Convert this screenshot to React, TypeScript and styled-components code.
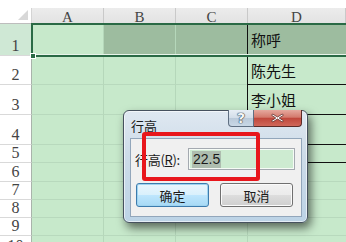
import styled, { createGlobalStyle } from 'styled-components';

const GlobalStyle = createGlobalStyle`
  html, body {
    margin: 0;
    padding: 0;
    background: #fff;
  }
  * {
    box-sizing: border-box;
  }
`;

const COLUMNS = ['A', 'B', 'C', 'D'];
const ROW_HEIGHTS = [32, 29, 30, 30, 18, 19, 18, 18, 18, 20];
const D_TEXT: Record<number, string> = { 1: '称呼', 2: '陈先生', 3: '李小姐' };
const BORDERED_ROWS = 5;

export default function App() {
  return (
    <>
      <GlobalStyle />
      <Page>
        <Sheet $rows={ROW_HEIGHTS}>
          <Corner>
            <CornerTriangle />
          </Corner>
          {COLUMNS.map((letter) => (
            <ColHead key={letter}>{letter}</ColHead>
          ))}
          {ROW_HEIGHTS.map((_, index) => {
            const row = index + 1;
            const isSelected = row === 1;
            return [
              <RowHead key={`h${row}`} $selected={isSelected}>
                {row}
              </RowHead>,
              ...COLUMNS.map((letter, colIndex) => {
                const isD = letter === 'D';
                const bordered = isD && row <= BORDERED_ROWS;
                return (
                  <Cell
                    key={`${letter}${row}`}
                    $shaded={isSelected && colIndex > 0}
                    $blackLeft={bordered}
                    $blackBottom={bordered && row > 1}
                    $last={isD}
                  >
                    {isD && D_TEXT[row]}
                  </Cell>
                );
              })
            ];
          })}
          <RowSelection>
            <FillHandle />
          </RowSelection>
        </Sheet>

        <DialogFrame>
          <TitleBar>
            <TitleText>行高</TitleText>
            <CaptionButtons>
              <HelpButton>?</HelpButton>
              <CloseButton>
                <svg width="13" height="10" viewBox="0 0 12 9">
                  <path
                    d="M1.5 0.8 L6 3.6 L10.5 0.8 L11.4 2 L7.6 4.5 L11.4 7 L10.5 8.2 L6 5.4 L1.5 8.2 L0.6 7 L4.4 4.5 L0.6 2 Z"
                    fill="#fff"
                    stroke="#5a2a26"
                    strokeWidth="0.7"
                  />
                </svg>
              </CloseButton>
            </CaptionButtons>
          </TitleBar>
          <ClientArea>
            <FieldRow>
              <FieldLabel>
                行高(<u>R</u>):
              </FieldLabel>
              <HeightInput>
                <SelectedText>22.5</SelectedText>
              </HeightInput>
            </FieldRow>
            <ButtonRow>
              <DialogButton $primary>确定</DialogButton>
              <DialogButton>取消</DialogButton>
            </ButtonRow>
          </ClientArea>
        </DialogFrame>

        <Highlight />
      </Page>
    </>
  );
}

const Page = styled.div`
  position: relative;
  width: 346px;
  height: 242px;
  overflow: hidden;
  background: #fff;
`;

const Sheet = styled.div<{ $rows: number[] }>`
  position: relative;
  display: grid;
  grid-template-columns: 32px 72px 72px 72px 1fr;
  grid-template-rows: 16px ${({ $rows }) => $rows.map((h) => `${h}px`).join(' ')};
  margin-top: 8px;
`;

const Corner = styled.div`
  position: relative;
  background: #fff;
  border-right: 1px solid #d4d4d4;
  border-bottom: 1px solid #bdbdbd;
`;

const CornerTriangle = styled.div`
  position: absolute;
  right: 3px;
  bottom: 3px;
  width: 0;
  height: 0;
  border-left: 10px solid transparent;
  border-bottom: 10px solid #d8d8d8;
`;

const ColHead = styled.div`
  display: flex;
  align-items: center;
  justify-content: center;
  padding-top: 2px;
  background: linear-gradient(#ececec, #e2e2e2);
  border-right: 1px solid #c9c9c9;
  font-family: 'Liberation Serif', 'DejaVu Serif', serif;
  font-size: 15px;
  color: #444;
`;

const RowHead = styled.div<{ $selected: boolean }>`
  display: flex;
  align-items: flex-end;
  justify-content: center;
  padding-bottom: 1px;
  line-height: 16px;
  background: ${({ $selected }) => ($selected ? '#cfe8d5' : '#fff')};
  border-right: 1px solid ${({ $selected }) => ($selected ? '#7fa889' : '#a9b3ab')};
  border-bottom: 1px solid #d9d9d9;
  font-family: 'Liberation Serif', 'DejaVu Serif', serif;
  font-size: 16px;
  color: #444;
`;

const Cell = styled.div<{
  $shaded: boolean;
  $blackLeft: boolean;
  $blackBottom: boolean;
  $last: boolean;
}>`
  display: flex;
  align-items: center;
  padding-left: 3px;
  background: ${({ $shaded }) => ($shaded ? '#9dbc9f' : '#c7e9cb')};
  border-right: ${({ $last }) => ($last ? 'none' : '1px solid #b5d7ba')};
  border-bottom: 1px solid ${({ $blackBottom }) => ($blackBottom ? '#111' : '#b8d9bd')};
  border-left: ${({ $blackLeft }) => ($blackLeft ? '1px solid #111' : 'none')};
  margin-left: ${({ $blackLeft }) => ($blackLeft ? '-1px' : '0')};
  font-family: 'Noto Sans CJK SC', sans-serif;
  font-size: 15px;
  color: #111;
  white-space: nowrap;
`;

const RowSelection = styled.div`
  position: absolute;
  left: 31px;
  top: 15px;
  right: -2px;
  height: 34px;
  border: 2px solid #2a6a45;
  border-right: none;
  box-shadow: inset 0 -1px 0 #e8f4ea;
  pointer-events: none;
`;

const FillHandle = styled.div`
  position: absolute;
  left: -3px;
  bottom: -4px;
  width: 6px;
  height: 6px;
  background: #2a6a45;
  border: 1px solid #fff;
`;

const DialogFrame = styled.div`
  position: absolute;
  left: 123px;
  top: 110px;
  width: 185px;
  height: 113px;
  display: flex;
  flex-direction: column;
  border: 1px solid #46515e;
  border-radius: 6px;
  background: linear-gradient(180deg, #dfe8f1 0%, #cddbe8 40%, #bcd3e6 100%);
  box-shadow: 3px 5px 10px rgba(0, 0, 0, 0.55), inset 0 0 0 1px rgba(255, 255, 255, 0.6);
`;

const TitleBar = styled.div`
  display: flex;
  justify-content: space-between;
  height: 27px;
  padding-left: 7px;
  padding-right: 5px;
`;

const TitleText = styled.span`
  align-self: center;
  margin-top: 2px;
  font-family: 'Noto Sans CJK SC', sans-serif;
  font-size: 13px;
  color: #1a1a1a;
`;

const CaptionButtons = styled.div`
  display: flex;
  align-items: flex-start;
  margin-top: -1px;
`;

const HelpButton = styled.div`
  width: 26px;
  height: 17px;
  display: flex;
  align-items: center;
  justify-content: center;
  border: 1px solid #5f6f82;
  border-top: none;
  border-radius: 0 0 0 4px;
  background: linear-gradient(180deg, #e7eef5 0%, #d2dde8 50%, #b9c9d9 51%, #c9d8e6 100%);
  font-family: 'DejaVu Sans', sans-serif;
  font-size: 14px;
  font-weight: bold;
  color: #f4f6f8;
  text-shadow: 0 0 1px #2d3a48, 0 0 1px #2d3a48, 0 0 1px #2d3a48;
`;

const CloseButton = styled.div`
  width: 48px;
  height: 17px;
  display: flex;
  align-items: center;
  justify-content: center;
  border: 1px solid #5b2b27;
  border-left: none;
  border-top: none;
  border-radius: 0 0 4px 0;
  background: linear-gradient(180deg, #e6a99e 0%, #d47a6d 45%, #c0483c 52%, #d0685a 100%);
`;

const ClientArea = styled.div`
  flex: 1;
  display: flex;
  flex-direction: column;
  margin: 0 5px 5px 6px;
  padding: 9px 0 0 4px;
  background: #f0f0f0;
  border: 1px solid #92a6bb;
`;

const FieldRow = styled.div`
  display: flex;
  align-items: center;
`;

const FieldLabel = styled.span`
  width: 53px;
  font-family: 'Noto Sans CJK SC', sans-serif;
  font-size: 13px;
  letter-spacing: -0.3px;
  color: #1a1a1a;
  white-space: nowrap;

  u {
    text-decoration-thickness: 1px;
    text-underline-offset: 1px;
  }
`;

const HeightInput = styled.div`
  width: 107px;
  height: 22px;
  display: flex;
  align-items: center;
  padding-left: 3px;
  border: 1px solid #a4a9b0;
  box-shadow: inset 0 0 0 1px #f6fbf6;
  background: #cdebd1;
`;

const SelectedText = styled.span`
  padding: 1px 1px;
  background: #aebdaf;
  font-family: 'Liberation Sans', Arial, sans-serif;
  font-size: 14px;
  line-height: 15px;
  color: #1a1a1a;
`;

const ButtonRow = styled.div`
  display: flex;
  gap: 11px;
  margin-top: 13px;
  padding-left: 1px;
`;

const DialogButton = styled.div<{ $primary?: boolean }>`
  width: 73px;
  height: 24px;
  display: flex;
  align-items: center;
  justify-content: center;
  border: 1px solid ${({ $primary }) => ($primary ? '#3d7bad' : '#707070')};
  border-radius: 3px;
  background: ${({ $primary }) =>
    $primary
      ? 'linear-gradient(180deg, #eaf6fd 0%, #d9f0fc 50%, #bee6fd 51%, #a7d9f5 100%)'
      : 'linear-gradient(180deg, #f2f2f2 0%, #ebebeb 50%, #dddddd 51%, #cfcfcf 100%)'};
  box-shadow: ${({ $primary }) => ($primary ? 'inset 0 0 0 1px #9fd4f0' : 'inset 0 0 0 1px #fbfbfb')};
  font-family: 'Noto Sans CJK SC', sans-serif;
  font-size: 13px;
  color: #1a1a1a;
`;

const Highlight = styled.div`
  position: absolute;
  left: 142px;
  top: 132px;
  width: 118px;
  height: 49px;
  border: 4px solid #e8161c;
  border-radius: 3px;
  pointer-events: none;
`;
